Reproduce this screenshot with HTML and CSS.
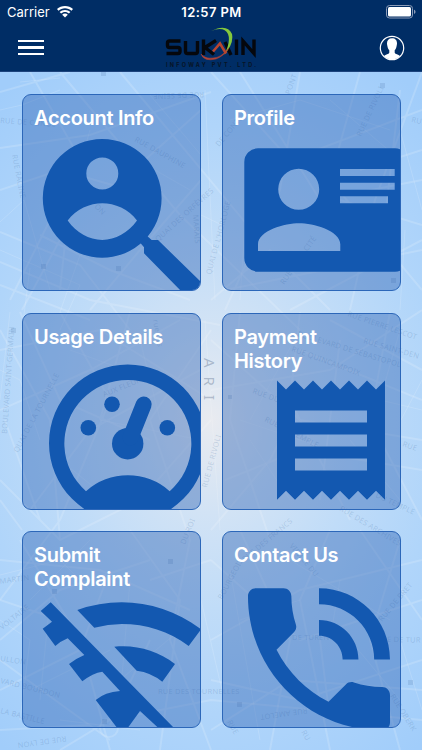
FILE: index.html
```html
<!DOCTYPE html>
<html lang="en">
<head>
    <meta charset="UTF-8">
    <meta name="viewport" content="width=device-width, initial-scale=1.0">
    <title>Sukain Infoway</title>
    <link rel="stylesheet" href="styles.css">
</head>
<body>
    <!-- Map background -->
    <svg class="map" viewBox="0 0 422 750">
        <g class="streets">
            <path d="M0 92L70 72M0 148L90 135L211 92M0 190L60 170L130 190M30 72L75 150L60 290M0 262L90 300L220 325M0 232L80 265L130 330M10 300L50 220L90 190M22 310L68 225M0 285L90 320M40 235L110 270L190 300M60 72L180 215L300 330M120 72L260 240M100 200L201 110M201 180L140 250L90 310"/>
            <path d="M211 72L290 160L422 110M240 72L320 200L422 180M300 72L280 190L225 310M360 72L330 180L422 290M422 72L375 200L350 310M340 200L422 225M400 90L380 260M225 290L422 250M290 310L422 240M211 300L270 250L330 310M360 170L422 150"/>
            <path d="M0 330L50 420L60 540M0 350L100 330L211 400M20 312L60 400L150 440M60 312L110 400L60 520L0 600M0 480L60 540L140 500L211 420M130 312L100 420M0 410L90 370L180 320M211 330L150 420L190 540M30 510L90 430L200 370M0 500L22 530M5 420L40 520"/>
            <path d="M211 340L300 420L422 440M240 312L230 420L270 540M300 312L290 400L350 520M211 390L330 370L422 310M390 312L370 420L422 520M225 480L300 450L422 470M330 320L422 370M300 350L422 400M340 340L320 500M211 530L270 460L300 400"/>
            <path d="M0 560L100 570L190 610M0 640L60 590L150 560M0 690L80 650L110 570M20 540L80 640L110 750M0 660L110 740M60 750L110 720L211 700L422 720M130 530L180 600L160 750M0 600L60 620L130 700M190 540L170 640L211 750M150 580L211 560M0 730L90 725M110 725L150 640"/>
            <path d="M211 560L300 640L422 600M240 530L290 640L270 750M330 530L300 600L330 750M211 640L300 590L422 560M211 680L300 700L422 660M360 530L422 620M400 540L370 640L400 750M320 640L330 720M211 730L290 680L422 690"/>
        </g>
        <g class="streets-thin">
            <path d="M0 110L22 105L60 90M20 82L60 78M0 222L24 200L50 290M0 250L80 285L60 330M30 268L22 330M80 255L60 312M150 95L201 155M120 150L190 190M90 130L70 200M230 120L300 100L390 130M250 150L240 300M400 130L422 210M405 230L400 310M330 100L400 160M201 215L222 225M205 90L215 300"/>
            <path d="M0 370L20 380L40 440M10 312L0 400M70 350L180 390M80 380L60 460L110 500M140 340L160 420M100 420L201 440M300 330L250 420M240 420L330 450M250 440L290 500M400 330L380 400L422 410M350 440L400 500M401 420L422 380M205 320L220 530"/>
            <path d="M0 575L60 560L90 590M0 620L30 640L20 720M30 690L110 650M130 580L120 700M50 600L40 700M60 720L140 730M180 630L120 680M230 570L260 740M290 560L390 620M340 580L330 640M350 640L400 700M240 620L300 600M201 600L222 690M400 640L422 710M90 540L30 600"/>
        </g>
        <circle class="streets" cx="109" cy="728" r="9"/>
        <g class="street-names">
            <text transform="translate(0 123) rotate(4)">RUE DE CONDÉ</text>
            <text transform="translate(204 92) rotate(178)">RUE DE SEINE</text>
            <text transform="translate(134 141) rotate(29)">RUE DAUPHINE</text>
            <text transform="translate(12 155) rotate(79)">RUE RACINE</text>
            <text transform="translate(158 242) rotate(-42)">QUAI DES ORFÈVRES</text>
            <text transform="translate(193 215) rotate(86)">MARAIS</text>
            <text transform="translate(94 207) rotate(45)">ON</text>
            <text transform="translate(211 275) rotate(-75)">QUAI DE L'HORLOGE</text>
            <text transform="translate(219 147) rotate(-50)">DE CONTI</text>
            <text transform="translate(361 137) rotate(-65)">RUE DE RIVOLI</text>
            <text transform="translate(411 122) rotate(12)">RU</text>
            <text transform="translate(290 95) rotate(-70)">PONT</text>
            <text transform="translate(284 285) rotate(-55)">RUE DE LA CITÉ</text>
            <text transform="translate(7 434) rotate(-86)">BOULEVARD SAINT-GERMAIN</text>
            <text transform="translate(18 453) rotate(-62)">QUAI DE LA TOURNELLE</text>
            <text transform="translate(104 397) rotate(-22)">AUX FLEURS</text>
            <text transform="translate(153 320) rotate(80)">rue des</text>
            <text transform="translate(207 488) rotate(-75)">RUE DE RIVOLI</text>
            <text transform="translate(347 316) rotate(19)">RUE PIERRE LESCOT</text>
            <text transform="translate(363 343) rotate(16)">RUE SAINT-DEN</text>
            <text transform="translate(297 336) rotate(17)">BOULEVARD DE SÉBASTOPOL</text>
            <text transform="translate(291 351) rotate(20)">RUE QUINCAMPOIX</text>
            <text transform="translate(252 393) rotate(20)">RUE DU</text>
            <text transform="translate(264 421) rotate(27)">RUE DU TEMPLE</text>
            <text transform="translate(375 497) rotate(25)">DU TEMPLE</text>
            <text transform="translate(402 446) rotate(20)">RUE</text>
            <text transform="translate(339 510) rotate(31)">RUE DES ARCHIVES</text>
            <text transform="translate(245 562) rotate(-40)">RUE DES FRANCS</text>
            <text transform="translate(289 546) rotate(50)">VIEILLE DU</text>
            <text transform="translate(222 600) rotate(-62)">BOURGEOIS</text>
            <text transform="translate(185 545) rotate(-68)">DU ROI</text>
            <text transform="translate(0 584) rotate(-8)">MARTIN</text>
            <text transform="translate(2 630) rotate(-38)">VOLTAIRE</text>
            <text transform="translate(0 661) rotate(8)">ULLON</text>
            <text transform="translate(0 683) rotate(14)">VARD BOURDON</text>
            <text transform="translate(0 713) rotate(14)">LA BASTILLE</text>
            <text transform="translate(158 694)">RUE DES TOURNELLES</text>
            <text transform="translate(292 640)">DE TURENNE</text>
            <text transform="translate(387 642) rotate(1)">E DE TUR</text>
            <text transform="translate(307 708) rotate(172)">RUE AMELOT</text>
            <text transform="translate(66 736) rotate(172)">RUE DE LYON</text>
            <text transform="translate(382 622) rotate(-50)">RUE DE BRET</text>
            <text transform="translate(390 696) rotate(58)">RUE OBERK</text>
            <text transform="translate(227 722) rotate(60)">RUE</text>
            <text transform="translate(301 732) rotate(60)">RU</text>
        </g>
        <text class="city" transform="translate(204 358) rotate(90)">ARI</text>
        <g class="stations">
            <rect x="101" y="72" width="5" height="4"/><rect x="41" y="264" width="5" height="5"/>
            <rect x="116" y="266" width="5" height="5"/><rect x="380" y="83" width="5" height="5"/>
            <rect x="391" y="278" width="5" height="5"/><rect x="11" y="328" width="5" height="5"/>
            <rect x="228" y="395" width="4" height="4"/><rect x="52" y="589" width="5" height="5"/>
            <rect x="168" y="559" width="5" height="5"/><rect x="237" y="702" width="5" height="5"/>
            <rect x="102" y="719" width="5" height="5"/><rect x="408" y="680" width="5" height="5"/>
        </g>
    </svg>

    <header class="header">
        <div class="status-bar">
            <div class="carrier">
                <span>Carrier</span>
                <svg width="16" height="12" viewBox="0 0 16 12" fill="#fff">
                    <path d="M8 0C4.900 0 2.100 1.200 0 3.100L1.500 4.700C3.200 3.100 5.500 2.200 8 2.200s4.800.9 6.500 2.500L16 3.100C13.900 1.200 11.100 0 8 0z"/>
                    <path d="M8 3.900c-2.100 0-4 .8-5.400 2.100l1.500 1.600C5.100 6.600 6.500 6 8 6s2.900.6 3.900 1.600L13.400 6C12 4.700 10.100 3.900 8 3.900z"/>
                    <path d="M8 7.600c-1.100 0-2.100.4-2.800 1.100L8 11.600l2.800-2.900C10.100 8 9.100 7.600 8 7.600z"/>
                </svg>
            </div>
            <div class="time">12:57 PM</div>
            <svg class="battery" width="30" height="14" viewBox="0 0 30 14">
                <rect x=".5" y=".5" width="26" height="12.500" rx="3" fill="none" stroke="#8c9cb8"/>
                <rect x="2" y="2" width="23" height="9.500" rx="1.500" fill="#fff"/>
                <path d="M28 4.700v4.200c1-.4 1.500-1.200 1.500-2.100S29 5.100 28 4.700z" fill="#8c9cb8"/>
            </svg>
        </div>
        <div class="nav-bar">
            <div class="menu-button">
                <span></span>
                <span></span>
                <span></span>
            </div>
            <svg class="logo" width="96" height="44" viewBox="163 26 96 44">
                <g fill="none" stroke="#05070c" stroke-width="3.400">
                    <path d="M180.500 41H169.500Q167.500 41 167.500 43V45.500Q167.500 47.500 169.500 47.500H178Q180 47.500 180 49.500V51.500Q180 53.500 178 53.500H166.500"/>
                    <path d="M185.500 41V51.500Q185.500 53.500 187.500 53.500H195.500Q197.500 53.500 197.500 51.500V41"/>
                    <path d="M203.500 39.500V55M216 40.500L205 47.500L214 54.500"/>
                    <path d="M225 42L231 55M236.500 39.500V55M243 55V41L254 53.500V39.500"/>
                </g>
                <path d="M211 31Q227 23 232 34Q234 44 224 55Q231 42 228 34Q224 26 211 31z" fill="#84c83c"/>
                <path d="M201 54Q204 62 216 59Q224 56 229 48Q221 58 213 58Q205 59 201 54z" fill="#b04336" stroke="#b04336" stroke-width=".5"/>
                <path d="M213 51.500L220 43.500L226 53.500" fill="none" stroke="#b9452f" stroke-width="2.600"/>
                <text x="166" y="67.300" textLength="90" class="logo-sub">INFOWAY PVT. LTD.</text>
            </svg>
            <svg class="user" width="26" height="26" viewBox="0 0 26 26">
                <circle cx="13" cy="13" r="11.700" fill="none" stroke="#fff" stroke-width="1.200"/>
                <path d="M13 3.200c-3.400 0-5.200 2.300-5 5.400.1 1 .1 1.600.4 2.300.2 2 1 3.200 1.900 4.300v2.600c-.5 1.500-3.600 1.700-5.300 3.300a11 11 0 0 0 16 0c-1.700-1.600-4.800-1.800-5.300-3.300v-2.600c.9-1.100 1.700-2.300 1.900-4.300.3-.7.300-1.300.4-2.300.2-3.100-1.600-5.400-5-5.400z" fill="#fff"/>
            </svg>
        </div>
    </header>

    <main class="menu">
        <div class="card">
            <svg class="card-icon" viewBox="23 95 177 195">
                <path fill-rule="evenodd" d="M42.800 198.300a59.400 59.400 0 1 0 118.800 0a59.400 59.400 0 1 0-118.800 0zM86.300 173.400a16 16 0 1 0 32 0a16 16 0 1 0-32 0zM67.700 220.600C76 209 90 203.300 102.300 203.300C114.500 203.300 129 209 137 220.600C128 233 115.500 240 102.300 240C89 240 76.500 233 67.700 220.600z"/>
                <path d="M140 242.500L144 247.300V253.300L182 292H203V284L158 240H151.700L146 235z"/>
            </svg>
            <h2>Account Info</h2>
        </div>

        <div class="card">
            <svg class="card-icon" viewBox="223 95 177 195">
                <path fill-rule="evenodd" d="M258 148.300H395a13.700 13.700 0 0 1 13.700 13.700V258a13.700 13.700 0 0 1-13.700 13.700H258a13.700 13.700 0 0 1-13.700-13.700V162a13.700 13.700 0 0 1 13.700-13.700zM278.200 189.300a20.500 20.500 0 1 0 41 0a20.500 20.500 0 1 0-41 0zM258 251H340.300V244.200C340.300 230.500 312.900 223.200 299.100 223.200S258 230.500 258 244.200zM340 169H394.700V176H340zM340 182.700H394.700V189.700H340zM340 196.200H388V203.200H340z"/>
            </svg>
            <h2>Profile</h2>
        </div>

        <div class="card">
            <svg class="card-icon" viewBox="23 313.500 177 195">
                <path fill-rule="evenodd" d="M49 442.700a78.700 78.700 0 1 0 157.400 0a78.700 78.700 0 1 0-157.400 0zM86 490.700A63.500 63.500 0 1 1 169.700 490.700A62.800 62.800 0 0 0 86 490.700z"/>
                <circle cx="127.700" cy="443.200" r="15.700"/>
                <path d="M143.700 404L130.500 437" stroke="#1358b0" stroke-width="16" stroke-linecap="round"/>
                <circle cx="88.300" cy="427.300" r="7.800"/>
                <circle cx="112" cy="403.700" r="7.800"/>
                <circle cx="167.300" cy="427.300" r="7.800"/>
            </svg>
            <h2>Usage Details</h2>
        </div>

        <div class="card">
            <svg class="card-icon" viewBox="223 313.500 177 195">
                <path fill-rule="evenodd" d="M277 380l9 9 9-9 9 9 9-9 9 9 9-9 9 9 9-9 9 9 9-9 9 9 9-9V499.300l-9-9-9 9-9-9-9 9-9-9-9 9-9-9-9 9-9-9-9 9-9-9-9 9zM295 410H367V422H295zM295 434H367V446H295zM295 458H367V470H295z"/>
            </svg>
            <h2>Payment<br>History</h2>
        </div>

        <div class="card">
            <svg class="card-icon" viewBox="23 532 177 195">
                <path d="M77.300 610Q99 602.300 121.700 602.300C150 602.300 178 612 201 629.300L188.700 646C169 631 146 624 121.700 624Q108 624 94.300 627.700z"/>
                <path d="M114.300 646.800C136 644.500 157 650.500 175 664L162.300 681.700Q151 672.500 136.700 670.700z"/>
                <path d="M50.700 602.300L175 729H159.500L140 711L127 729H118L95.700 700Q105 692 120 691L102.300 671.700Q93 673 82.300 681.300L69 664Q76 658.500 84.300 655L67.700 638.300Q61 641 55.300 646L42.700 628.700L52 621.700L40.700 611z"/>
            </svg>
            <h2>Submit<br>Complaint</h2>
        </div>

        <div class="card">
            <svg class="card-icon" viewBox="223 532 177 195">
                <path transform="translate(224.300 564.700) scale(7.890)" d="M19 12h2c0-4.970-4.030-9-9-9v2c3.870 0 7 3.130 7 7zm-4 0h2c0-2.760-2.240-5-5-5v2c1.660 0 3 1.340 3 3zm5 3.500c-1.250 0-2.450-.2-3.570-.57-.35-.11-.74-.03-1.020.24l-2.200 2.200c-2.830-1.440-5.150-3.750-6.590-6.590l2.200-2.210c.28-.26.36-.65.25-1C8.700 6.450 8.500 5.250 8.500 4c0-.55-.45-1-1-1H4c-.55 0-1 .45-1 1 0 9.390 7.610 17 17 17 .55 0 1-.45 1-1v-3.500c0-.55-.45-1-1-1z"/>
            </svg>
            <h2>Contact Us</h2>
        </div>
    </main>
</body>
</html>
```
FILE: styles.css
```css
* {
    box-sizing: border-box;
}
body {
    margin: 0;
    height: 750px;
    overflow: hidden;
    font-family: Inter, 'Liberation Sans', sans-serif;
    color: white;
    background: radial-gradient(ellipse 330px 420px at 211px 420px, #e9ebf0 0%, #d2e3f5 22%, #c0dcf8 45%, #b0d5fa 70%, #a1cdfa 100%);
}
.map {
    position: absolute;
    top: 0;
    left: 0;
    width: 422px;
    height: 750px;
    z-index: -1;
}
.streets {
    fill: none;
    stroke: rgba(255, 255, 255, 0.16);
    stroke-width: 2;
}
.streets-thin {
    fill: none;
    stroke: rgba(255, 255, 255, 0.15);
    stroke-width: 1;
}
.street-names {
    font-family: 'Noto Sans', sans-serif;
    font-size: 7.5px;
    letter-spacing: 0.2px;
    fill: rgba(70, 110, 160, 0.22);
}
.city {
    font-family: 'Noto Sans', sans-serif;
    font-size: 15px;
    letter-spacing: 9px;
    fill: rgba(90, 110, 140, 0.4);
}
.stations {
    fill: rgba(70, 110, 160, 0.18);
}
.header {
    height: 72px;
    background-color: #002d65;
    border-bottom: 1px solid #1d437c;
}
.status-bar {
    display: grid;
    grid-template-columns: 1fr auto 1fr;
    align-items: center;
    height: 24px;
    padding: 0 6px 0 7px;
    font-size: 13px;
}
.carrier {
    display: flex;
    align-items: center;
    gap: 7px;
}
.time {
    font-weight: 600;
    letter-spacing: 0.4px;
}
.battery {
    justify-self: end;
}
.nav-bar {
    display: flex;
    justify-content: space-between;
    align-items: center;
    height: 47px;
    padding: 0 18px;
}
.menu-button {
    display: flex;
    flex-direction: column;
    gap: 4px;
    width: 26px;
}
.menu-button span {
    height: 2.3px;
    background-color: white;
}
.logo {
    margin-right: 2px;
}
.logo-sub {
    font-size: 5.5px;
    font-weight: 700;
    fill: #071426;
}
.user {
    margin-right: -1px;
}
.menu {
    display: grid;
    grid-template-columns: 179px 178.5px;
    grid-auto-rows: 197px;
    gap: 21.4px 21px;
    padding: 22.2px 21px 22px 22px;
}
.card {
    display: grid;
    overflow: hidden;
    border: 1px solid #2c67b9;
    border-radius: 9px;
    background-color: rgba(34, 91, 176, 0.4);
}
.card-icon, .card h2 {
    grid-area: 1 / 1;
}
.card-icon {
    width: 177px;
    height: 195px;
    fill: #1358b0;
}
.card h2 {
    margin: 0;
    padding: 11px;
    font-size: 20px;
    font-weight: 600;
    letter-spacing: -0.3px;
    line-height: 24px;
}
```
